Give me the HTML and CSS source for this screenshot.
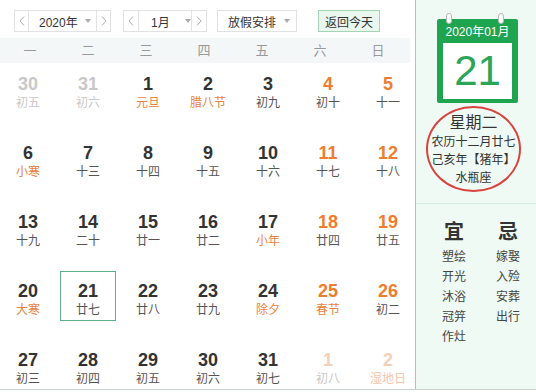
FILE: index.html
```html
<!DOCTYPE html>
<html lang="zh-CN">
<head>
<meta charset="utf-8">
<title>万年历</title>
<link rel="stylesheet" href="styles.css">
</head>
<body>
<div class="app">
  <div class="main">
    <div class="toolbar">
      <div class="sel sel-year">
        <span class="nav"><svg width="6" height="10" viewBox="0 0 6 10"><polyline points="5,0.5 1,5 5,9.5" fill="none" stroke="#aaa" stroke-width="1"/></svg></span>
        <span class="val">2020年<i class="caret"></i></span>
        <span class="nav"><svg width="6" height="10" viewBox="0 0 6 10"><polyline points="1,0.5 5,5 1,9.5" fill="none" stroke="#aaa" stroke-width="1"/></svg></span>
      </div>
      <div class="sel sel-month">
        <span class="nav"><svg width="6" height="10" viewBox="0 0 6 10"><polyline points="5,0.5 1,5 5,9.5" fill="none" stroke="#aaa" stroke-width="1"/></svg></span>
        <span class="val">1月<i class="caret"></i></span>
        <span class="nav"><svg width="6" height="10" viewBox="0 0 6 10"><polyline points="1,0.5 5,5 1,9.5" fill="none" stroke="#aaa" stroke-width="1"/></svg></span>
      </div>
      <div class="sel sel-holiday">
        <span class="val">放假安排<i class="caret"></i></span>
      </div>
      <button class="today">返回今天</button>
    </div>
    <div class="weekhead">
      <span>一</span><span>二</span><span>三</span><span>四</span><span>五</span><span>六</span><span>日</span>
    </div>
    <div class="grid">
      <div class="cell other"><div class="num">30</div><div class="lun">初五</div></div>
      <div class="cell other"><div class="num">31</div><div class="lun">初六</div></div>
      <div class="cell"><div class="num">1</div><div class="lun fest">元旦</div></div>
      <div class="cell"><div class="num">2</div><div class="lun fest">腊八节</div></div>
      <div class="cell"><div class="num">3</div><div class="lun">初九</div></div>
      <div class="cell wk"><div class="num">4</div><div class="lun">初十</div></div>
      <div class="cell wk"><div class="num">5</div><div class="lun">十一</div></div>

      <div class="cell"><div class="num">6</div><div class="lun fest">小寒</div></div>
      <div class="cell"><div class="num">7</div><div class="lun">十三</div></div>
      <div class="cell"><div class="num">8</div><div class="lun">十四</div></div>
      <div class="cell"><div class="num">9</div><div class="lun">十五</div></div>
      <div class="cell"><div class="num">10</div><div class="lun">十六</div></div>
      <div class="cell wk"><div class="num">11</div><div class="lun">十七</div></div>
      <div class="cell wk"><div class="num">12</div><div class="lun">十八</div></div>

      <div class="cell"><div class="num">13</div><div class="lun">十九</div></div>
      <div class="cell"><div class="num">14</div><div class="lun">二十</div></div>
      <div class="cell"><div class="num">15</div><div class="lun">廿一</div></div>
      <div class="cell"><div class="num">16</div><div class="lun">廿二</div></div>
      <div class="cell"><div class="num">17</div><div class="lun fest">小年</div></div>
      <div class="cell wk"><div class="num">18</div><div class="lun">廿四</div></div>
      <div class="cell wk"><div class="num">19</div><div class="lun">廿五</div></div>

      <div class="cell"><div class="num">20</div><div class="lun fest">大寒</div></div>
      <div class="cell selected"><div class="num">21</div><div class="lun">廿七</div></div>
      <div class="cell"><div class="num">22</div><div class="lun">廿八</div></div>
      <div class="cell"><div class="num">23</div><div class="lun">廿九</div></div>
      <div class="cell"><div class="num">24</div><div class="lun fest">除夕</div></div>
      <div class="cell wk"><div class="num">25</div><div class="lun fest">春节</div></div>
      <div class="cell wk"><div class="num">26</div><div class="lun">初二</div></div>

      <div class="cell"><div class="num">27</div><div class="lun">初三</div></div>
      <div class="cell"><div class="num">28</div><div class="lun">初四</div></div>
      <div class="cell"><div class="num">29</div><div class="lun">初五</div></div>
      <div class="cell"><div class="num">30</div><div class="lun">初六</div></div>
      <div class="cell"><div class="num">31</div><div class="lun">初七</div></div>
      <div class="cell other wk"><div class="num">1</div><div class="lun">初八</div></div>
      <div class="cell other wk"><div class="num">2</div><div class="lun fest">湿地日</div></div>
    </div>
  </div>
  <div class="side">
    <div class="side-top">
      <div class="cal-icon">
        <i class="ring ring-l"></i><i class="ring ring-r"></i>
        <div class="cal-head">2020年01月</div>
        <div class="cal-body">21</div>
      </div>
      <div class="info">
        <div class="info-week">星期二</div>
        <div class="info-line">农历十二月廿七</div>
        <div class="info-line">己亥年【猪年】</div>
        <div class="info-line">水瓶座</div>
      </div>
    </div>
    <div class="yiji">
      <div class="yj-col">
        <div class="yj-title">宜</div>
        <div class="yj-item">塑绘</div>
        <div class="yj-item">开光</div>
        <div class="yj-item">沐浴</div>
        <div class="yj-item">冠笄</div>
        <div class="yj-item">作灶</div>
      </div>
      <div class="yj-col">
        <div class="yj-title">忌</div>
        <div class="yj-item">嫁娶</div>
        <div class="yj-item">入殓</div>
        <div class="yj-item">安葬</div>
        <div class="yj-item">出行</div>
      </div>
    </div>
  </div>
</div>
</body>
</html>
```

FILE: styles.css
```css
* { box-sizing: border-box; }
html, body { margin: 0; padding: 0; background: #fff; }
body {
  font-family: "Liberation Sans", "Noto Sans CJK SC", sans-serif;
  color: #333;
}
.app {
  width: 536px;
  height: 390px;
  display: flex;
  border-bottom: 1px solid #c9d2cd;
  overflow: hidden;
}
.main {
  width: 415px;
  flex: none;
}
.toolbar {
  display: flex;
  align-items: center;
  padding: 10px 0 0 14px;
  height: 32px;
}
.sel {
  display: flex;
  height: 22px;
  border: 1px solid #e2e2e2;
  font-size: 12px;
  color: #333;
}
.sel .nav {
  display: flex;
  align-items: center;
  justify-content: center;
}
.sel .val {
  display: flex;
  align-items: center;
  border-left: 1px solid #e2e2e2;
  border-right: 1px solid #e2e2e2;
}
.caret {
  display: inline-block;
  width: 0;
  height: 0;
  border-left: 3px solid transparent;
  border-right: 3px solid transparent;
  border-top: 4px solid #aaa;
}
.sel-year { width: 97px; }
.sel-year .nav:first-child { width: 13px; }
.sel-year .val { width: 69px; padding-left: 10px; }
.sel-year .val .caret { margin-left: 7px; }
.sel-year .nav:last-child { flex: 1; }
.sel-month { width: 84px; margin-left: 12px; }
.sel-month .nav:first-child { width: 14px; }
.sel-month .val { width: 54px; padding-left: 12px; }
.sel-month .val .caret { margin-left: 15px; }
.sel-month .nav:last-child { flex: 1; }
.sel-holiday { width: 80px; margin-left: 10px; }
.sel-holiday .val { border: 0; padding-left: 10px; }
.sel-holiday .val .caret { margin-left: 8px; }
.today {
  margin-left: 21px;
  width: 62px;
  height: 22px;
  padding: 0;
  border: 1px solid #a3d4b6;
  background: #eaf7ef;
  color: #333;
  font: 12px "Liberation Sans", "Noto Sans CJK SC", sans-serif;
}
.weekhead {
  margin-top: 6px;
  width: 410px;
  height: 25px;
  background: #f3f7f8;
  display: grid;
  grid-template-columns: repeat(7, 58px);
  padding-left: 1px;
}
.weekhead span {
  text-align: center;
  line-height: 25px;
  font-size: 13px;
  color: #999;
}
.grid {
  margin-top: 1px;
  display: grid;
  grid-template-columns: repeat(7, 56px);
  grid-auto-rows: 50px;
  column-gap: 4px;
  row-gap: 19px;
}
.cell {
  border: 1px solid transparent;
  padding-top: 9px;
  text-align: center;
}
.cell.selected { border-color: #62b08a; }
.num {
  font-size: 18px;
  font-weight: bold;
  line-height: 20px;
  color: #333;
}
.lun {
  font-size: 12px;
  line-height: 16px;
  margin-top: 1px;
  color: #555;
  white-space: nowrap;
}
.lun.fest { color: #e8823e; }
.cell.wk .num { color: #ee7d2f; }
.cell.other .num { color: #c8c8c8; }
.cell.other .lun { color: #c8c8c8; }
.cell.other.wk .num { color: #f6d0b6; }
.cell.other .lun.fest { color: #f4c6a6; }

.side {
  width: 121px;
  flex: none;
  border-left: 1px solid #a9c8b8;
  background: #effaf4;
}
.side-top {
  height: 204px;
  border-bottom: 1px solid #d5ebde;
  padding-top: 19px;
}
.cal-icon {
  position: relative;
  width: 81px;
  height: 84px;
  margin-left: 21px;
  background: #1fa450;
  padding: 0 6px 4px;
  border-radius: 2px;
}
.ring {
  position: absolute;
  top: -6px;
  width: 6px;
  height: 11px;
  border-radius: 3px;
  background: #fff;
  border: 1px solid #b8b8b8;
}
.ring-l { left: 9px; }
.ring-r { left: 61px; }
.cal-head {
  height: 24px;
  padding-top: 2px;
  line-height: 22px;
  text-align: center;
  color: #fff;
  font-size: 12px;
}
.cal-body {
  height: 56px;
  background: #fff;
  text-align: center;
  line-height: 56px;
  font-size: 42px;
  color: #2aa55a;
}
.info {
  margin: 3px 0 0 10px;
  width: 95px;
  height: 86px;
  border: 2px solid #d8433f;
  border-radius: 50%;
  padding-top: 5px;
  text-align: center;
  white-space: nowrap;
}
.info-week {
  font-size: 16px;
  line-height: 20px;
  color: #333;
}
.info-line {
  font-size: 12px;
  line-height: 18px;
  color: #333;
  margin: 0 -6px;
}
.yiji {
  display: flex;
  gap: 14px;
  padding: 15px 0 0 18px;
}
.yj-col {
  width: 40px;
  text-align: center;
}
.yj-title {
  font-size: 20px;
  font-weight: bold;
  line-height: 26px;
  color: #333;
}
.yj-item {
  font-size: 12px;
  line-height: 20px;
  color: #444;
}
.yj-title + .yj-item { margin-top: 2px; }
```
